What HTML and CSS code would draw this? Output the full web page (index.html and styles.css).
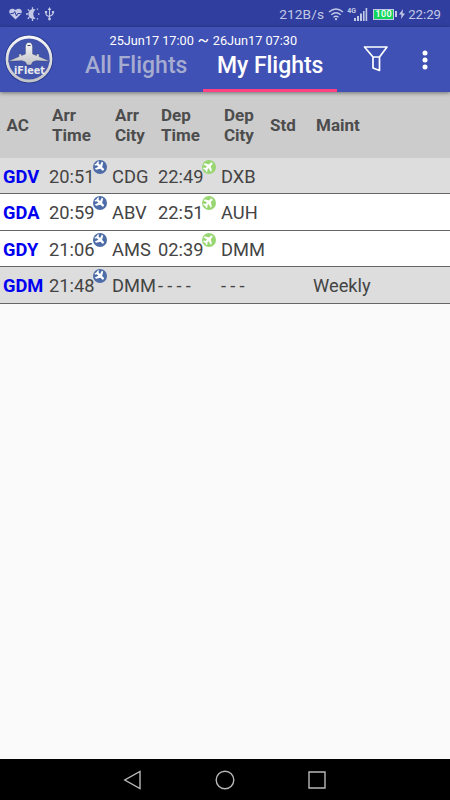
FILE: index.html
```html
<!DOCTYPE html>
<html lang="en">
<head>
<meta charset="utf-8">
<title>iFleet</title>
<link rel="stylesheet" href="styles.css">
</head>
<body>
<svg class="defs" aria-hidden="true">
  <symbol id="plane" viewBox="0 0 24 24"><path d="M22 16.500v-3.500l-8-5V3.500C14 2 13 1 11.500 1S9 2 9 3.500V8l-8 5v3.500l8-2.500v4.500l-3 2V23l5.500-1 5.500 1v-2.500l-3-2V14z"/></symbol>
</svg>
<div class="screen">
  <header class="status">
    <svg class="status-left" width="50" height="16" viewBox="0 0 50 16" fill="#c3c8e6">
      <path d="M7.500 13.500 2 8C-.5 4 3.500.8 7.500 4c4-3.200 8 0 5.500 4z"/>
      <path d="M2.500 7.500h3l1.200-2 1.800 4.500 1.200-2.500h3" fill="none" stroke="#303f9f" stroke-width="1"/>
      <path d="M27.500 3.500a5 5 0 1 0 0 9 5.600 5.600 0 0 1 0-9z"/>
      <path d="M24.500 1.200v2M24.500 13v2M18 8h2M19.800 3.400l1.500 1.500M19.800 12.700l1.500-1.500M29 3.500l.8-.8M29 12.500l.8.8M30 8h1.400" stroke="#c3c8e6" stroke-width="1.300"/>
      <path d="M41.500 3v10M38 5.500v2.800q0 1 3.500 2.500M45 5.500v2.300q0 1-3.500 2.500" fill="none" stroke="#c3c8e6" stroke-width="1.100"/>
      <path d="m41.500 1-1.800 3h3.600zM36.900 5h2.200v2.200h-2.200zM43.900 5h2.200v2.200h-2.200z"/><circle cx="41.500" cy="13" r="1.400"/>
    </svg>
    <span class="rate">212B/s</span>
    <svg class="wifi" width="16" height="14" viewBox="0 0 16 14" fill="none" stroke="#c3c8e6" stroke-width="1.400">
      <path d="M1 5q7-6 14 0M3.300 7.700q4.700-4 9.400 0M5.500 10.200q2.500-2 5 0"/><circle cx="8" cy="12.200" r="1.100" fill="#c3c8e6" stroke="none"/>
    </svg>
    <span class="net">4G</span>
    <svg class="bars" width="14" height="13" viewBox="0 0 14 13" fill="#c3c8e6"><path d="M0 10h2v3H0zM3 8h2v5H3zM6 5.500h2V13H6zM9 3h1.600v10H9zM11.600 0h1.600v13h-1.600z"/></svg>
    <span class="battery">100</span><i class="battery-tip"></i>
    <svg class="bolt" width="6" height="10" viewBox="0 0 6 10" fill="#c3c8e6"><path d="M4 0 0 5.500h2.500L2 10l4-5.500H3.500z"/></svg>
    <span class="clock">22:29</span>
  </header>
  <nav class="appbar">
    <svg class="logo" width="50" height="50" viewBox="0 0 50 50">
      <defs><linearGradient id="metal" x1="0" y1="0" x2="0" y2="1"><stop offset="0" stop-color="#f6f6f6"/><stop offset="1" stop-color="#c3c4c8"/></linearGradient></defs>
      <circle cx="25" cy="25" r="24.300" fill="#24378f"/>
      <circle cx="25" cy="25" r="22" fill="#4254ac" stroke="url(#metal)" stroke-width="2.800"/>
      <path d="M25 8.500c2.300 0 3.600 1.800 3.600 4.500v7l3.900 1.500v-1.500h2.600v2.600L46 27.300l-14-.6-3.400 1.300-1.500 3h-4.200l-1.500-3-3.400-1.300-14 .6 10.900-4.700v-2.600h2.600v1.500l3.900-1.500v-7c0-2.700 1.300-4.500 3.600-4.500z" fill="url(#metal)" stroke="#26366f" stroke-width=".4"/>
      <path d="M23.500 11.500h3" stroke="#333d61" stroke-width="1"/>
      <text x="10" y="40" textLength="31" lengthAdjust="spacingAndGlyphs" class="logo-name">iFleet</text>
    </svg>
    <div class="center">
      <div class="range"><span>25Jun17 17:00</span><span class="tilde">~</span><span>26Jun17 07:30</span></div>
      <div class="tabs"><div class="tab">All Flights</div><div class="tab active">My Flights</div></div>
    </div>
    <svg class="filter" width="26" height="28" viewBox="0 0 26 28" fill="none" stroke="#fff" stroke-width="1.700" stroke-linejoin="round"><path d="M1.500 2h22.500L16.500 12v13.500l-6.500-2.500V12zL10 12h6.500"/></svg>
    <svg class="more" width="6" height="20" viewBox="0 0 6 20" fill="#fff"><circle cx="3" cy="3" r="2.500"/><circle cx="3" cy="10" r="2.500"/><circle cx="3" cy="17" r="2.500"/></svg>
  </nav>
  <main>
    <div class="head cols"><span>AC</span><span>Arr<br>Time</span><span>Arr<br>City</span><span>Dep<br>Time</span><span>Dep<br>City</span><span>Std</span><span>Maint</span></div>
    <div class="row cols shade"><b>GDV</b><span>20:51<i class="badge arr"><svg><use href="#plane"/></svg></i></span><span>CDG</span><span>22:49<i class="badge dep"><svg><use href="#plane"/></svg></i></span><span>DXB</span></div>
    <div class="row cols tall"><b>GDA</b><span>20:59<i class="badge arr"><svg><use href="#plane"/></svg></i></span><span>ABV</span><span>22:51<i class="badge dep"><svg><use href="#plane"/></svg></i></span><span>AUH</span></div>
    <div class="row cols"><b>GDY</b><span>21:06<i class="badge arr"><svg><use href="#plane"/></svg></i></span><span>AMS</span><span>02:39<i class="badge dep"><svg><use href="#plane"/></svg></i></span><span>DMM</span></div>
    <div class="row cols tall shade"><b>GDM</b><span>21:48<i class="badge arr"><svg><use href="#plane"/></svg></i></span><span>DMM</span><span class="dashes">----</span><span class="dashes">---</span><span></span><span>Weekly</span></div>
  </main>
  <footer class="navbar">
    <svg width="20" height="22" viewBox="0 0 20 22"><path d="M17 2.500v17L1.800 11z"/></svg>
    <svg width="20" height="22" viewBox="0 0 20 22"><circle cx="10" cy="11" r="8.800"/></svg>
    <svg width="20" height="22" viewBox="0 0 20 22"><path d="M2 3h16v16H2z"/></svg>
  </footer>
</div>
</body>
</html>
```
FILE: styles.css
```css
* { box-sizing: border-box; }
body { margin: 0; font-family: Roboto, "Liberation Sans", sans-serif; }
.defs { display: none; }
.screen { width: 450px; height: 800px; display: flex; flex-direction: column; background: #fafafa; overflow: hidden; }
.status { height: 27px; flex: none; background: #303f9f; color: #c3c8e6; display: flex; align-items: center; padding: 1px 9px 0 8px; white-space: nowrap; }
.status-left { margin-right: auto; }
.rate { font-size: 13.700px; letter-spacing: .1px; }
.wifi { margin-left: 4px; }
.net { font-size: 7px; font-weight: 700; margin: -7px 0 0 3px; width: 8px; }
.bars { margin-left: -1px; }
.battery { width: 21px; height: 11px; margin-left: 5px; border: 1px solid #c3c8e6; background: #12d65c; color: #fff; font-size: 9px; line-height: 9px; text-align: center; font-weight: 500; letter-spacing: .4px; }
.battery-tip { width: 2px; height: 6px; margin-left: 1px; background: #c3c8e6; }
.bolt { margin: 0 3px 0 2px; }
.clock { font-size: 13.200px; }
.appbar { height: 65px; flex: none; display: flex; background: #3f51b5; color: #fff; position: relative; z-index: 1; box-shadow: 0 1px 4px rgba(0,0,0,.45); }
.logo { margin: 7px 13px 0 4px; flex: none; }
.logo-name { font: 700 10.500px "DejaVu Sans", sans-serif; fill: #e9eaee; }
.center { width: 270px; display: flex; flex-direction: column; }
.range { height: 25px; padding: 6px 0 0 42.500px; font-size: 12.700px; line-height: 15px; white-space: nowrap; display: flex; }
.tilde { width: 19px; text-align: center; font-size: 17px; line-height: 14px; }
.tabs { display: flex; height: 40px; }
.tab { width: 136px; padding-left: 18px; font-size: 23px; line-height: 28px; font-weight: 500; color: #a6abd0; white-space: nowrap; }
.tab.active { width: 134px; padding-left: 14px; color: #fff; border-bottom: 3px solid #ff4081; letter-spacing: -.05px; }
.filter { margin: 18px 0 0 26px; }
.more { margin: 23px 0 0 32.500px; }
main { flex: 1; color: #444; }
.cols { display: grid; grid-template-columns: 45.500px 63px 46px 63px 46px 46px 1fr; align-items: center; }
.head { height: 66px; padding-left: 6.500px; background: #ccc; font-size: 17px; line-height: 20px; font-weight: 700; color: #4d4d4d; }
.row { height: 36px; padding: 1px 0 0 3.500px; background: #fff; border-bottom: 1px solid #666; font-size: 18.300px; line-height: 35px; white-space: nowrap; align-items: start; }
.tall { height: 37px; }
.shade { background: #ddd; }
.row b { color: #0000f0; margin-left: -.5px; }
.row span { position: relative; }
.dashes { letter-spacing: 4.200px; }
.badge { position: absolute; left: 43.500px; top: .5px; width: 14px; height: 14px; border-radius: 50%; display: flex; align-items: center; justify-content: center; }
.badge svg { width: 11.500px; height: 11.500px; fill: #fff; display: block; }
.arr { background: #4e6ca8; }
.arr svg { transform: rotate(135deg); }
.dep { background: #98d672; }
.dep svg { transform: rotate(45deg); }
.navbar { height: 41px; flex: none; background: #000; display: flex; justify-content: center; align-items: center; gap: 72px; }
.navbar svg { fill: none; stroke: #b8b8b8; stroke-width: 1.400; }
```
